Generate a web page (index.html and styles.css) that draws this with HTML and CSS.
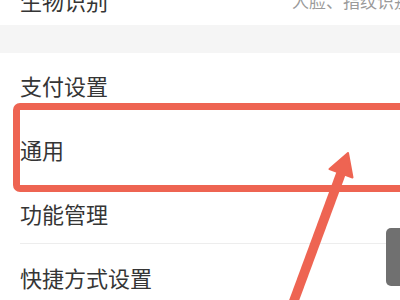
FILE: index.html
```html
<!DOCTYPE html>
<html lang="zh-CN">
<head>
<meta charset="utf-8">
<link rel="stylesheet" href="styles.css">
</head>
<body>
<div class="page">
  <div class="row row-top">
    <span class="label">生物识别</span>
    <span class="value">人脸、指纹识别</span>
  </div>
  <div class="band"></div>
  <div class="row"><span class="label">支付设置</span></div>
  <div class="row"><span class="label">通用</span></div>
  <div class="row row-line"><span class="label">功能管理</span></div>
  <div class="row"><span class="label">快捷方式设置</span></div>

  <div class="highlight"></div>
  <div class="float-tab"></div>
  <svg class="arrow" width="400" height="300" viewBox="0 0 400 300">
    <line x1="292" y1="306" x2="343" y2="168" stroke="#ee6452" stroke-width="9.5"/>
    <polygon points="348,153 329.5,169 352.5,177.5" fill="#ee6452" stroke="#ee6452" stroke-width="2" stroke-linejoin="round"/>
  </svg>
</div>
</body>
</html>
```

FILE: styles.css
```css
html, body {
  margin: 0;
  padding: 0;
  background: #ffffff;
}

.page {
  position: relative;
  width: 400px;
  height: 300px;
  overflow: hidden;
  font-family: "Noto Sans CJK SC", "Noto Sans", sans-serif;
}

.row {
  height: 64px;
  display: flex;
  align-items: center;
  padding-left: 20px;
  box-sizing: border-box;
}

.label {
  font-size: 22px;
  line-height: 22px;
  color: #353535;
  white-space: nowrap;
}

.row-top {
  height: 50px;
  margin-top: -25px;
  display: grid;
  grid-template-columns: 272px 1fr;
  align-items: center;
  overflow: hidden;
}

.value {
  font-size: 17px;
  line-height: 17px;
  color: #9a9a9a;
  white-space: nowrap;
}

.band {
  height: 28px;
  background: #f5f5f5;
}

.row-line {
  position: relative;
}

.row-line::after {
  content: "";
  position: absolute;
  left: 20px;
  right: 0;
  bottom: 1px;
  height: 1px;
  background: #ededed;
}

.highlight {
  position: absolute;
  left: 13px;
  top: 103px;
  width: 420px;
  height: 89px;
  box-sizing: border-box;
  border: 7.5px solid #ee6452;
  border-radius: 7px;
}

.float-tab {
  position: absolute;
  left: 386px;
  top: 228px;
  width: 24px;
  height: 58px;
  background: #707070;
  border-radius: 5px;
}

.arrow {
  position: absolute;
  left: 0;
  top: 0;
}
```
